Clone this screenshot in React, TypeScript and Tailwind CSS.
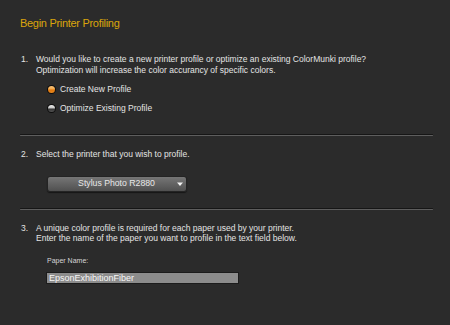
import React from 'react';

function Divider() {
  return (
    <div className="mt-[16px] mr-[17px] flex flex-col">
      <div className="h-px rounded-full bg-[#161616]" />
      <div className="h-px rounded-full bg-[#5e5e5e]" />
    </div>
  );
}

function Radio({ checked, label }: { checked?: boolean; label: string }) {
  return (
    <div className="flex h-[19px] items-center">
      <span className="flex h-[9px] w-[9px] items-center justify-center rounded-full bg-[#0d0d0d]">
        {checked ? (
          <span className="h-[7px] w-[7px] rounded-full bg-[linear-gradient(to_bottom,#f7c27a_0%,#f3a848_48%,#de740c_52%,#e88a20_100%)]" />
        ) : (
          <span className="h-[7px] w-[7px] rounded-full bg-[linear-gradient(to_bottom,#ececec_0%,#c4c4c4_48%,#333_52%,#555_100%)]" />
        )}
      </span>
      <span className="ml-[4px]">{label}</span>
    </div>
  );
}

function Step({ n, children }: { n: string; children: React.ReactNode }) {
  return (
    <div className="flex">
      <div className="w-[16px] pl-[1px]">{n}</div>
      <div className="flex-1">{children}</div>
    </div>
  );
}

export default function App() {
  return (
    <div
      className="h-[325px] w-[450px] overflow-hidden bg-[#2b2b2b] pl-[20px] pt-[17px] text-[8.5px] leading-[10.5px] text-[#e4e4e4]"
      style={{ fontFamily: '"Liberation Sans", Arial, sans-serif' }}
    >
      <h1 className="text-[11px] leading-[13px] tracking-[-0.3px] text-[#dba50c]">Begin Printer Profiling</h1>

      {/* paso 1 */}
      <div className="mt-[24px]">
        <Step n="1.">
          <p>Would you like to create a new printer profile or optimize an existing ColorMunki profile?</p>
          <p>Optimization will increase the color accurancy of specific colors.</p>
          <div className="mt-[5px] pl-[11px]">
            <Radio checked label="Create New Profile" />
            <Radio label="Optimize Existing Profile" />
          </div>
        </Step>
      </div>

      <Divider />

      {/* paso 2 */}
      <div className="mt-[13px]">
        <Step n="2.">
          <p>Select the printer that you wish to profile.</p>
          <div className="mt-[16px] ml-[11px] flex h-[16px] w-[140px] items-center rounded-[3px] border border-[#242424] bg-[linear-gradient(to_bottom,#767676,#505050)] shadow-[0_1px_1px_rgba(0,0,0,0.5)]">
            <span className="flex-1 pl-[8px] text-center text-[8.7px] text-[#e8e8e8]">Stylus Photo R2880</span>
            <svg width="6" height="4" viewBox="0 0 6 4" className="mr-[3px]">
              <path d="M0 0.5 L6 0.5 L3 4 Z" fill="#f4f4f4" />
            </svg>
          </div>
        </Step>
      </div>

      <Divider />

      {/* paso 3 */}
      <div className="mt-[13px]">
        <Step n="3.">
          <p>A unique color profile is required for each paper used by your printer.</p>
          <p>Enter the name of the paper you want to profile in the text field below.</p>
          <div className="mt-[12px] pl-[11px] text-[7px] leading-[9px] text-[#d6d6d6]">Paper Name:</div>
          <div className="mt-[7px] ml-[10px] flex h-[12px] w-[193px] items-center border border-[#1c1c1c] bg-[#8c8c8c] pl-[2px] text-[9px] leading-[10px] text-[#f6f6f6]">
            EpsonExhibitionFiber
          </div>
        </Step>
      </div>
    </div>
  );
}
